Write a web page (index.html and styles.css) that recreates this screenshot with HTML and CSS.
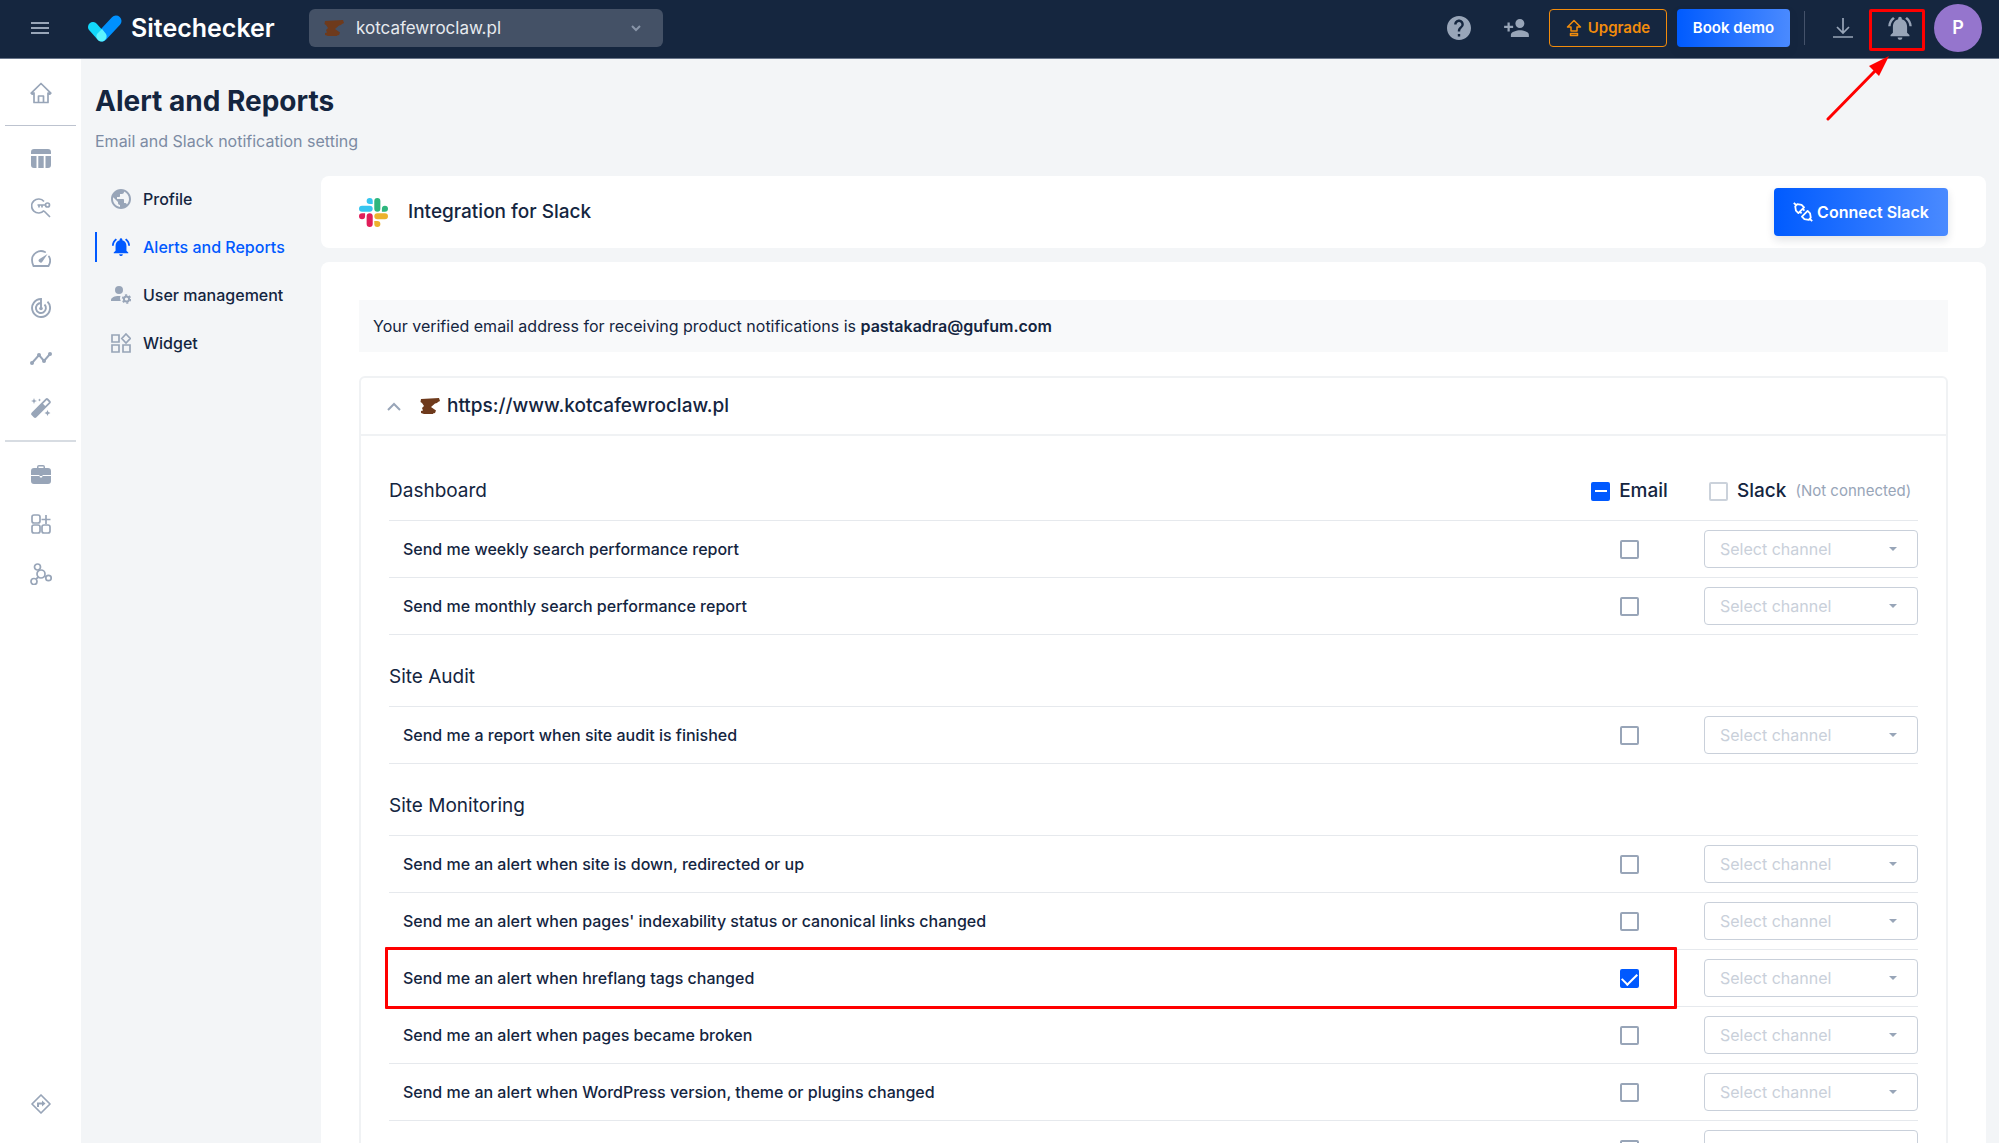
FILE: index.html
```html
<!DOCTYPE html>
<html lang="en">
<head>
<meta charset="utf-8">
<meta name="viewport" content="width=device-width, initial-scale=1">
<title>Alert and Reports – Sitechecker</title>
<link rel="stylesheet" href="styles.css">
</head>
<body>
<svg class="sprite" aria-hidden="true">
  <symbol id="bell" viewBox="1 2 22 20"><path fill="currentColor" d="M7.58 4.08L6.15 2.65C3.75 4.48 2.17 7.3 2.03 10.5h2c.15-2.65 1.51-4.97 3.55-6.42zm12.39 6.42h2c-.15-3.2-1.73-6.02-4.12-7.85l-1.42 1.43c2.02 1.45 3.39 3.77 3.54 6.42zM18 11c0-3.07-1.64-5.64-4.5-6.32V4c0-.83-.67-1.5-1.5-1.5s-1.5.67-1.5 1.5v.68C7.63 5.36 6 7.92 6 11v5l-2 2v1h16v-1l-2-2v-5zm-6 11c.14 0 .27-.01.4-.04.65-.14 1.18-.58 1.44-1.18.1-.24.15-.5.15-.78h-4c.01 1.1.9 2 2.01 2z"/></symbol>
  <symbol id="favicon" viewBox="0 0 20 17"><path fill="#6e3a1c" d="M1 1 19 0l1 3-2 1-1 1-2 .5-4 3.500 5 3.500-1 2.500-2 .5V16H4l-3-1v-2l2-.5L2 10l2-2-2-3-1.500-1z"/></symbol>
</svg>

<header class="topbar">
  <button class="icon-btn menu" aria-label="Menu"><svg width="20" height="14" viewBox="0 0 20 14"><path stroke="currentColor" stroke-width="2" d="M1 2h18M1 7h18M1 12h18"/></svg></button>
  <a class="brand" href="#">
    <svg width="34" height="27" viewBox="0 0 34 27"><path stroke="#0091ff" stroke-width="11" stroke-linecap="round" d="M28 6 14 21"/><path stroke="#12d8fb" stroke-width="10" stroke-linecap="round" d="M5 12l8 9"/><path fill="#5cf3ff" d="M14 14l4 5c1 2 1 4-1 6-2 2-5 2-7 0-2-2-2-4-1-6z"/></svg>
    <span>Sitechecker</span>
  </a>
  <button class="site-picker">
    <svg width="20" height="17"><use href="#favicon"/></svg>
    <span>kotcafewroclaw.pl</span>
    <svg width="10" height="7" viewBox="0 0 10 7"><path fill="none" stroke="#8995a8" stroke-width="2" d="M1 1l4 4 4-4"/></svg>
  </button>
  <div class="tools">
    <button class="icon-btn help" aria-label="Help"><svg width="24" height="24" viewBox="2 2 20 20"><path fill="currentColor" d="M12 2C6.48 2 2 6.48 2 12s4.48 10 10 10 10-4.48 10-10S17.52 2 12 2zm1 17h-2v-2h2v2zm2.07-7.75l-.9.92C13.45 12.9 13 13.5 13 15h-2v-.5c0-1.1.45-2.1 1.17-2.83l1.24-1.26c.37-.36.59-.86.59-1.41 0-1.1-.9-2-2-2s-2 .9-2 2H8c0-2.21 1.79-4 4-4s4 1.79 4 4c0 .88-.36 1.68-.93 2.25z"/></svg></button>
    <button class="icon-btn invite" aria-label="Invite user"><svg width="25" height="18" viewBox="1 4 22 16"><path fill="currentColor" d="M15 12c2.21 0 4-1.79 4-4s-1.79-4-4-4-4 1.79-4 4 1.79 4 4 4zm-9-2V7H4v3H1v2h3v3h2v-3h3v-2H6zm9 4c-2.67 0-8 1.34-8 4v2h16v-2c0-2.66-5.33-4-8-4z"/></svg></button>
    <button class="btn upgrade"><svg width="16" height="18" viewBox="0 0 16 18"><path fill="none" stroke="currentColor" stroke-width="1.500" stroke-linejoin="round" d="M8 1.500 1.500 8H5v4h6V8h3.500zM4.500 14.500h7v2h-7z"/></svg>Upgrade</button>
    <button class="btn primary demo">Book demo</button>
    <span class="split"></span>
    <button class="icon-btn download" aria-label="Downloads"><svg width="20" height="20" viewBox="0 0 20 20"><path fill="none" stroke="currentColor" stroke-width="1.700" d="M10 0v15M4 9l6 6 6-6M0 19h20"/></svg></button>
    <button class="icon-btn alerts" aria-label="Notifications"><svg width="26" height="24"><use href="#bell"/></svg>
      <svg class="pointer" width="64" height="66" viewBox="0 0 64 66" aria-hidden="true"><path stroke="#f00" stroke-width="3" stroke-linecap="round" d="M2 64 50 15"/><path fill="#f00" d="M63 1 43 11l4 4 6 6z"/></svg>
    </button>
    <button class="avatar">P</button>
  </div>
</header>

<div class="shell">
  <nav class="rail" aria-label="Tools">
    <a href="#" aria-label="Home"><svg width="22" height="22" viewBox="0 0 22 22"><path fill="none" stroke="currentColor" stroke-width="1.700" stroke-linejoin="round" d="M11 1.500 1.200 11.200l1 1L4 11v9.500h14V11l1.800 1.200 1-1zM8.500 20v-6h5v6"/></svg></a>
    <hr>
    <a href="#" aria-label="Dashboard"><svg width="20" height="19" viewBox="0 0 20 19"><path fill="currentColor" d="M3 0h14a3 3 0 0 1 3 3v2H0V3a3 3 0 0 1 3-3zM0 7h5.500v12H3a3 3 0 0 1-3-3zM7.300 7h5.400v12H7.300zM14.500 7H20v9a3 3 0 0 1-3 3h-2.500z"/></svg></a>
    <a href="#" aria-label="Keywords"><svg width="20" height="20" viewBox="0 0 20 20"><g fill="none" stroke="currentColor" stroke-width="1.700"><path d="M13 3.500A7 7 0 1 0 13 12.500M13 13l6 6"/><circle cx="16.500" cy="7" r="2"/><path d="M14.500 7H6.500M8 7v2.500M11 7v2.500"/></g></svg></a>
    <a href="#" aria-label="Performance"><svg width="20" height="17" viewBox="0 0 20 17"><path fill="none" stroke="currentColor" stroke-width="1.800" stroke-linecap="round" d="M14 2A9 9 0 0 0 1 10c0 2 .5 4 1.500 6h15c1.800-3 2-7 .5-9.500"/><path fill="currentColor" d="M16.500 4l-5 7.500a2 2 0 1 1-3-2.500z"/></svg></a>
    <a href="#" aria-label="Monitoring"><svg width="20" height="20" viewBox="0 0 20 20"><g fill="none" stroke="currentColor" stroke-width="1.900"><path d="M16.500 3.700A9 9 0 1 1 10 1v9"/><path d="M13.500 6.500A5 5 0 1 1 10 5"/></g><circle cx="10" cy="10.500" r="1.800" fill="currentColor"/></svg></a>
    <a href="#" aria-label="Rank tracker"><svg width="22" height="13" viewBox="0 0 22 13"><path fill="none" stroke="currentColor" stroke-width="2" d="M2 11l7-8 5 6 6-7"/><g fill="currentColor"><circle cx="2" cy="11" r="2"/><circle cx="9" cy="3" r="2"/><circle cx="14" cy="9" r="2"/><circle cx="20" cy="2" r="2"/></g></svg></a>
    <a href="#" aria-label="Magic tools"><svg width="20" height="20" viewBox="0 0 20 20"><path fill="currentColor" fill-rule="evenodd" d="M.8 14.500 14.500.8a2 2 0 0 1 2.800 0l1.900 1.900a2 2 0 0 1 0 2.800L5.500 19.200a2 2 0 0 1-2.800 0L.8 17.300a2 2 0 0 1 0-2.800zM12 5.800l2.200 2.200L18 4.200 15.800 2zM3 0l.8 2.200L6 3l-2.200.8L3 6l-.8-2.200L0 3l2.200-.8zM16.500 12l.9 2.100 2.100.9-2.100.9-.9 2.100-.9-2.100-2.100-.9 2.100-.9zM8.500.5l.5 1 1 .5-1 .5-.5 1-.5-1-1-.5 1-.5z"/></svg></a>
    <hr class="thick">
    <a href="#" aria-label="Projects"><svg width="20" height="19" viewBox="0 0 20 19"><path fill="currentColor" fill-rule="evenodd" d="M6 3V2a2 2 0 0 1 2-2h4a2 2 0 0 1 2 2v1h3a3 3 0 0 1 3 3v4h-8.500v1h-3v-1H0V6a3 3 0 0 1 3-3zm1.500 0h5V1.500h-5zM0 11h8.500l.5 1.500h2l.5-1.500H20v5a3 3 0 0 1-3 3H3a3 3 0 0 1-3-3z"/></svg></a>
    <a href="#" aria-label="Widgets"><svg width="20" height="20" viewBox="0 0 20 20"><g fill="none" stroke="currentColor" stroke-width="1.700"><rect x="1" y="1" width="8" height="8" rx="2"/><rect x="1" y="11" width="8" height="8" rx="2"/><rect x="11" y="11" width="8" height="8" rx="2"/><path d="M15 1v9M10.500 5.500h9"/></g></svg></a>
    <a href="#" aria-label="Integrations"><svg width="22" height="22" viewBox="0 0 22 22"><g fill="none" stroke="currentColor" stroke-width="1.700"><circle cx="11" cy="11" r="4"/><circle cx="7.500" cy="4" r="3"/><circle cx="4" cy="18.500" r="3"/><circle cx="18.500" cy="15" r="2.700"/><path d="M8.500 14 6 16M14.500 13l1.500 1"/></g></svg></a>
    <a href="#" class="last" aria-label="What's new"><svg width="20" height="20" viewBox="0 0 20 20"><path fill="none" stroke="currentColor" stroke-width="1.700" stroke-linejoin="round" d="M10 1l9 9-9 9-9-9z"/><path fill="currentColor" d="M6 13V8.500h5V6.500l3.500 3-3.500 3v-2H8V13z"/></svg></a>
  </nav>

  <main class="page">
    <h1>Alert and Reports</h1>
    <p class="lead">Email and Slack notification setting</p>
    <div class="columns">
      <nav class="menu-list" aria-label="Settings">
        <a href="#"><svg width="20" height="20" viewBox="2 2 20 20"><path fill="currentColor" d="M12 2C6.480 2 2 6.480 2 12s4.480 10 10 10 10-4.480 10-10S17.520 2 12 2zm-1 17.930c-3.950-.49-7-3.850-7-7.930 0-.62.08-1.210.21-1.790L9 15v1c0 1.100.9 2 2 2v1.930zm6.900-2.540c-.26-.81-1-1.390-1.900-1.390h-1v-3c0-.55-.45-1-1-1H8v-2h2c.55 0 1-.45 1-1V7h2c1.100 0 2-.9 2-2v-.41c2.930 1.190 5 4.060 5 7.410 0 2.080-.8 3.970-2.100 5.390z"/></svg>Profile</a>
        <a href="#" class="active" aria-current="page"><svg width="20" height="20"><use href="#bell"/></svg>Alerts and Reports</a>
        <a href="#"><svg width="20" height="18" viewBox="0 0 20 18"><g fill="currentColor"><circle cx="8" cy="4" r="4"/><path d="M0 15v-1c0-3 5-4.500 9.500-4 -.8 2-.5 3.500.3 5z"/></g><circle cx="15.500" cy="13" r="2.600" fill="none" stroke="currentColor" stroke-width="2"/><circle cx="15.500" cy="13" r="4" fill="none" stroke="currentColor" stroke-width="1.500" stroke-dasharray="2.200 2"/></svg>User management</a>
        <a href="#"><svg width="20" height="20" viewBox="0 0 20 20"><g fill="none" stroke="currentColor" stroke-width="1.700"><path d="M1 2h7v7H1zM1 12h7v7H1zM12 12h7v7h-7zM15 1l4.200 4.500L15 10l-4.200-4.500z"/></g></svg>Widget</a>
      </nav>

      <div class="content">
        <section class="card slack-card">
          <svg width="29" height="29" viewBox="0 0 24 24"><path fill="#e01e5a" d="M5.042 15.165a2.528 2.528 0 0 1-2.520 2.523A2.528 2.528 0 0 1 0 15.165a2.527 2.527 0 0 1 2.522-2.520h2.520v2.520zM6.313 15.165a2.527 2.527 0 0 1 2.521-2.520 2.527 2.527 0 0 1 2.521 2.520v6.313A2.528 2.528 0 0 1 8.834 24a2.528 2.528 0 0 1-2.521-2.522v-6.313z"/><path fill="#36c5f0" d="M8.834 5.042a2.528 2.528 0 0 1-2.521-2.520A2.528 2.528 0 0 1 8.834 0a2.528 2.528 0 0 1 2.521 2.522v2.520H8.834zM8.834 6.313a2.528 2.528 0 0 1 2.521 2.521 2.528 2.528 0 0 1-2.521 2.521H2.522A2.528 2.528 0 0 1 0 8.834a2.528 2.528 0 0 1 2.522-2.521h6.312z"/><path fill="#2eb67d" d="M18.956 8.834a2.528 2.528 0 0 1 2.522-2.521A2.528 2.528 0 0 1 24 8.834a2.528 2.528 0 0 1-2.522 2.521h-2.522V8.834zM17.688 8.834a2.528 2.528 0 0 1-2.523 2.521 2.527 2.527 0 0 1-2.520-2.521V2.522A2.527 2.527 0 0 1 15.165 0a2.528 2.528 0 0 1 2.523 2.522v6.312z"/><path fill="#ecb22e" d="M15.165 18.956a2.528 2.528 0 0 1 2.523 2.522A2.528 2.528 0 0 1 15.165 24a2.527 2.527 0 0 1-2.520-2.522v-2.522h2.520zM15.165 17.688a2.527 2.527 0 0 1-2.520-2.523 2.526 2.526 0 0 1 2.520-2.520h6.313A2.527 2.527 0 0 1 24 15.165a2.528 2.528 0 0 1-2.522 2.523h-6.313z"/></svg>
          <h2>Integration for Slack</h2>
          <button class="btn primary connect"><svg width="20" height="20" viewBox="0 0 20 20"><g transform="translate(10 10) rotate(45)" fill="none" stroke="currentColor" stroke-width="1.800" stroke-linejoin="round"><path d="M-13 0h3M-2.500-4v8h-3.500l-3.500-2.500v-3L-6-4zM-2.500-2H0M-2.500 2H0M2.500-4v8h3.500l3.500-2.500v-3L6-4zM10 0h3"/></g></svg>Connect Slack</button>
        </section>

        <section class="card main-card">
          <p class="notice">Your verified email address for receiving product notifications is <strong>pastakadra@gufum.com</strong></p>
          <div class="site">
            <button class="site-head" aria-expanded="true">
              <svg width="14" height="9" viewBox="0 0 14 9"><path fill="none" stroke="#98a5b8" stroke-width="2" d="M1 8l6-6 6 6"/></svg>
              <svg class="fav" width="20" height="17"><use href="#favicon"/></svg>
              <span>https://www.kotcafewroclaw.pl</span>
            </button>
            <table class="alerts-table">
              <colgroup><col><col class="c-email"><col class="c-slack"></colgroup>
              <tbody>
                <tr class="group"><th scope="rowgroup">Dashboard</th>
                  <th class="email"><label><input type="checkbox" class="mixed">Email</label></th>
                  <th class="slack"><label><input type="checkbox" disabled>Slack <small>(Not connected)</small></label></th></tr>
                <tr><td><label for="a1">Send me weekly search performance report</label></td><td class="email"><input type="checkbox" id="a1"></td><td><span class="select"><select disabled aria-label="Slack channel"><option>Select channel</option></select></span></td></tr>
                <tr><td><label for="a2">Send me monthly search performance report</label></td><td class="email"><input type="checkbox" id="a2"></td><td><span class="select"><select disabled aria-label="Slack channel"><option>Select channel</option></select></span></td></tr>
              </tbody>
              <tbody>
                <tr class="group"><th colspan="3" scope="rowgroup">Site Audit</th></tr>
                <tr><td><label for="a3">Send me a report when site audit is finished</label></td><td class="email"><input type="checkbox" id="a3"></td><td><span class="select"><select disabled aria-label="Slack channel"><option>Select channel</option></select></span></td></tr>
              </tbody>
              <tbody>
                <tr class="group"><th colspan="3" scope="rowgroup">Site Monitoring</th></tr>
                <tr><td><label for="a4">Send me an alert when site is down, redirected or up</label></td><td class="email"><input type="checkbox" id="a4"></td><td><span class="select"><select disabled aria-label="Slack channel"><option>Select channel</option></select></span></td></tr>
                <tr><td><label for="a5">Send me an alert when pages' indexability status or canonical links changed</label></td><td class="email"><input type="checkbox" id="a5"></td><td><span class="select"><select disabled aria-label="Slack channel"><option>Select channel</option></select></span></td></tr>
                <tr class="marked"><td><label for="a6">Send me an alert when hreflang tags changed</label></td><td class="email"><input type="checkbox" id="a6" checked></td><td><span class="select"><select disabled aria-label="Slack channel"><option>Select channel</option></select></span></td></tr>
                <tr><td><label for="a7">Send me an alert when pages became broken</label></td><td class="email"><input type="checkbox" id="a7"></td><td><span class="select"><select disabled aria-label="Slack channel"><option>Select channel</option></select></span></td></tr>
                <tr><td><label for="a8">Send me an alert when WordPress version, theme or plugins changed</label></td><td class="email"><input type="checkbox" id="a8"></td><td><span class="select"><select disabled aria-label="Slack channel"><option>Select channel</option></select></span></td></tr>
                <tr><td></td><td class="email"><input type="checkbox" aria-label="Email alert"></td><td><span class="select"><select disabled aria-label="Slack channel"><option>Select channel</option></select></span></td></tr>
              </tbody>
            </table>
          </div>
        </section>
      </div>
    </div>
  </main>
</div>
</body>
</html>
```
FILE: styles.css
```css
* { box-sizing: border-box; }
html, body { height: 100%; }
body {
  margin: 0;
  display: flex;
  flex-direction: column;
  overflow: hidden;
  background: #f3f5f7;
  color: #14253f;
  font: 500 16px/20px Inter, sans-serif;
}
button, select { font: inherit; color: inherit; }
button { border: 0; padding: 0; background: none; cursor: pointer; }
a { color: inherit; text-decoration: none; }
svg { display: block; flex: none; }
.sprite { position: absolute; width: 0; height: 0; }

.topbar {
  flex: none;
  display: flex;
  align-items: center;
  height: 59px;
  padding: 0 17px 2px 30px;
  background: #15263f;
  border-bottom: 1px solid #68758a;
  color: #98a5b8;
}
.icon-btn { display: flex; color: inherit; }
.menu { margin-right: 38px; }
.brand {
  display: flex;
  align-items: center;
  gap: 9px;
  width: 221px;
  color: #fff;
  font-size: 25px;
  font-weight: 600;
}
.site-picker {
  display: flex;
  align-items: center;
  gap: 12px;
  width: 354px;
  height: 38px;
  padding: 0 22px 0 15px;
  border-radius: 6px;
  background: #445166;
  color: #e7eaef;
  font-size: 17px;
  font-weight: 400;
}
.site-picker span { flex: 1; text-align: left; }
.tools { display: flex; align-items: center; margin-left: auto; }
.help { margin-right: 33px; }
.invite { margin-right: 20px; }
.btn {
  display: flex;
  align-items: center;
  justify-content: center;
  height: 38px;
  border-radius: 4px;
  font-size: 15px;
  font-weight: 600;
}
.primary {
  background: linear-gradient(90deg, #005bff, #4a8aff);
  box-shadow: 0 4px 8px #14253f22;
  color: #fff;
}
.upgrade { gap: 6px; width: 118px; border: 1px solid #f28c0c; color: #f28c0c; }
.demo { width: 113px; margin-left: 10px; }
.split { width: 1px; height: 34px; margin: 0 28px 0 14px; background: #44526a; }
.alerts {
  position: relative;
  width: 56px;
  height: 42px;
  margin: 4px 9px 0 16px;
  padding: 0 0 4px 6px;
  align-items: center;
  justify-content: center;
  border: 3px solid #f00;
  border-radius: 2px;
}
.pointer { position: absolute; left: -46px; top: 43px; z-index: 2; }
.avatar {
  width: 48px;
  height: 48px;
  border-radius: 50%;
  background: #9575cd;
  color: #fff;
  font-size: 18px;
  font-weight: 600;
}

.shell { flex: 1; display: flex; min-height: 0; }
.rail {
  flex: none;
  display: flex;
  flex-direction: column;
  width: 81px;
  padding: 9px 5px 14px;
  background: #fff;
  color: #98a5b8;
}
.rail a { flex: none; display: flex; align-items: center; justify-content: center; height: 50px; }
.rail hr { width: 100%; height: 1px; margin: 7px 0; border: 0; background: #bdc3cf; }
.rail .thick { height: 2px; background: #d7dce2; }
.rail .last { margin-top: auto; }

.page { flex: 1; display: flex; flex-direction: column; min-width: 0; padding: 26px 13px 0 14px; }
h1 { margin: 0; font-size: 28px; line-height: 32px; font-weight: 700; }
.lead { margin: 14px 0 0; color: #7c8ba3; font-weight: 400; }
.columns { flex: 1; display: flex; min-height: 0; margin-top: 25px; }
.menu-list { flex: none; width: 226px; padding-top: 8px; }
.menu-list a {
  display: flex;
  align-items: center;
  gap: 12px;
  height: 30px;
  margin-bottom: 18px;
  padding-left: 14px;
  border-left: 2px solid transparent;
}
.menu-list svg { color: #98a5b8; }
.menu-list .active { border-color: #0059ff; color: #0059ff; }
.menu-list .active svg { color: inherit; }

.content { flex: 1; display: flex; flex-direction: column; min-width: 0; }
.card { background: #fff; border-radius: 8px; }
.slack-card { flex: none; display: flex; align-items: center; height: 72px; padding: 0 38px; }
h2 { margin: 0 0 0 20px; font-size: 19px; font-weight: 500; }
.connect { gap: 4px; width: 174px; height: 48px; margin-left: auto; font-size: 16px; }
.main-card { flex: 1; min-height: 0; margin-top: 14px; padding: 38px 38px 0; border-radius: 8px 8px 0 0; }
.notice { margin: 0; padding: 16px 14px; background: #f8f9fa; font-weight: 400; }
.notice strong { font-weight: 600; }
.site { margin-top: 24px; border: 2px solid #f0f2f4; border-radius: 6px; }
.site-head {
  display: flex;
  align-items: center;
  width: 100%;
  height: 58px;
  padding: 0 26px;
  border-bottom: 2px solid #f0f2f4;
  font-size: 19px;
}
.fav { margin: 0 7px 0 19px; }

.alerts-table { width: calc(100% - 56px); margin: 12px 28px; table-layout: fixed; border-collapse: collapse; }
.c-email { width: 149px; }
.c-slack { width: 214px; }
tr { height: 57px; border-bottom: 1px solid #e6e9ed; }
.group { height: 72px; }
th { padding: 14px 0 0; text-align: left; font-size: 19px; font-weight: 400; }
td { padding: 0; }
td:first-child { padding-left: 14px; }
td.email, th.email { text-align: center; }
th label { display: inline-flex; align-items: center; gap: 9px; vertical-align: middle; font-weight: 500; white-space: nowrap; }
th.slack label { padding-left: 5px; }
small { font-size: 15px; font-weight: 400; color: #98a5b8; }
input {
  appearance: none;
  display: inline-block;
  flex: none;
  width: 19px;
  height: 19px;
  margin: 0;
  vertical-align: middle;
  border: 2px solid #98a5b8;
  border-radius: 2px;
}
input:disabled { border-color: #cbd2db; }
input:checked, .mixed { display: inline-grid; place-items: center; border-color: #0059ff; background: #0059ff; }
.mixed::before { content: ""; width: 12px; height: 2px; background: #fff; }
input:checked::before {
  content: "";
  width: 13px;
  height: 7px;
  margin-bottom: 3px;
  border: solid #fff;
  border-width: 0 0 2px 2px;
  transform: rotate(-45deg);
}
.select { position: relative; display: block; }
select {
  appearance: none;
  display: block;
  width: 100%;
  height: 38px;
  padding: 0 15px;
  border: 1px solid #c9d0da;
  border-radius: 4px;
  background: #fff;
  color: #c9d0da;
  font-weight: 400;
  opacity: 1;
}
.select::after {
  content: "";
  position: absolute;
  right: 21px;
  top: 17px;
  border: 4px solid transparent;
  border-top-color: #98a5b8;
  border-bottom: 0;
}
.marked { position: relative; }
.marked td:first-child::after {
  content: "";
  position: absolute;
  inset: -2px 241px -4px -4px;
  border: 3px solid #f00;
  border-radius: 1px;
  pointer-events: none;
}
```
